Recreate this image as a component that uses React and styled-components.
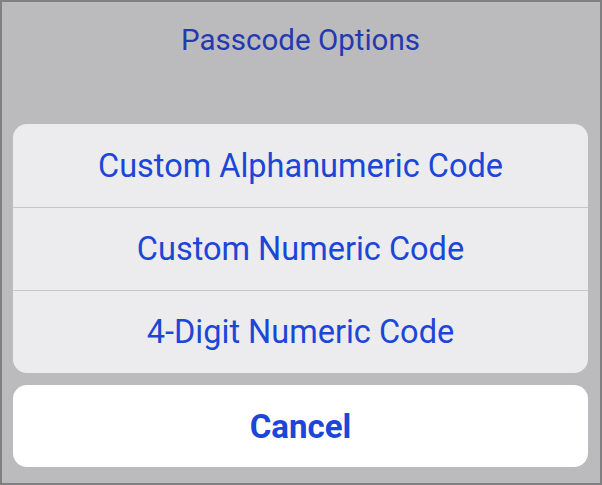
import React from "react";
import styled, { createGlobalStyle } from "styled-components";

const Global = createGlobalStyle`
  html, body { margin: 0; padding: 0; background: #bbbbbd; }
  * { box-sizing: border-box; }
`;

const Frame = styled.div`
  width: 602px;
  height: 485px;
  border: 2px solid #808080;
  background: #bbbbbd;
  display: flex;
  flex-direction: column;
  padding: 0 12px 16px 11px;
  font-family: Roboto, "Liberation Sans", sans-serif;
`;

const Header = styled.div`
  height: 122px;
  display: flex;
  justify-content: center;
  padding-top: 21px;
`;

const Title = styled.div`
  font-size: 29.5px;
  line-height: 34px;
  color: #2439b0;
`;

const Sheet = styled.div`
  background: #ececee;
  border-radius: 14px;
  overflow: hidden;
  display: flex;
  flex-direction: column;
`;

const Option = styled.div`
  height: 83px;
  display: flex;
  align-items: center;
  justify-content: center;
  font-size: 32.5px;
  color: #1c46d8;
  border-top: ${(p) => (p.$first ? "none" : "1px solid #c6c6c9")};
`;

const CancelButton = styled.div`
  margin-top: 12px;
  height: 82px;
  background: #ffffff;
  border-radius: 14px;
  display: flex;
  align-items: center;
  justify-content: center;
  font-size: 33px;
  font-weight: 700;
  color: #1c46d8;
`;

export default function App() {
  const options = [
    "Custom Alphanumeric Code",
    "Custom Numeric Code",
    "4-Digit Numeric Code",
  ];
  return (
    <>
      <Global />
      <Frame>
        <Header>
          <Title>Passcode Options</Title>
        </Header>
        <Sheet>
          {options.map((o, i) => (
            <Option key={o} $first={i === 0}>
              {o}
            </Option>
          ))}
        </Sheet>
        <CancelButton>Cancel</CancelButton>
      </Frame>
    </>
  );
}
